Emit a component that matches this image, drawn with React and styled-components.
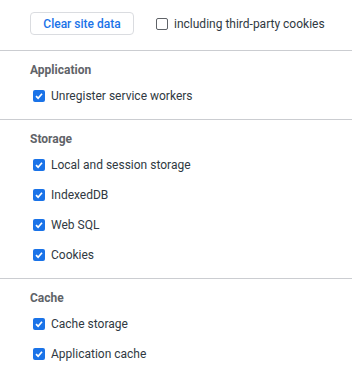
import styled, { createGlobalStyle } from 'styled-components';

const Global = createGlobalStyle`
  body {
    margin: 0;
    background: #fff;
    font-family: Roboto, "Liberation Sans", sans-serif;
    font-size: 12px;
    color: #303942;
  }
`;

const Toolbar = styled.div`
  display: flex;
  align-items: center;
  gap: 22px;
  padding: 12px 30px 15px;
  border-bottom: 1px solid #cbcdd1;
`;

const Button = styled.button`
  flex: none;
  height: 23px;
  width: 104px;
  padding: 0;
  border: 1px solid #dadce0;
  border-radius: 4px;
  background: #fff;
  color: #1a73e8;
  font-family: inherit;
  font-size: 12px;
  font-weight: 500;
`;

const Section = styled.div`
  padding: 12px 30px 13px;
  border-bottom: ${p => (p.last ? 'none' : '1px solid #cbcdd1')};
`;

const Heading = styled.div`
  font-weight: 700;
  color: #5f6368;
  line-height: 14px;
  margin-bottom: 9px;
`;

const List = styled.div`
  display: flex;
  flex-direction: column;
  gap: 10px;
`;

const Row = styled.label`
  display: flex;
  align-items: center;
  gap: 6px;
  height: 20px;
  white-space: nowrap;
  padding-left: ${p => (p.inset ? '3px' : '0')};
`;

const Box = styled.span`
  flex: none;
  box-sizing: border-box;
  width: 12px;
  height: 12px;
  border-radius: 2px;
  display: flex;
  align-items: center;
  justify-content: center;
  background: ${p => (p.checked ? '#1a73e8' : '#fff')};
  border: ${p => (p.checked ? 'none' : '1px solid #5f6368')};
`;

function Check({ checked, label, inset }) {
  return (
    <Row inset={inset}>
      <Box checked={checked}>
        {checked && (
          <svg width="10" height="10" viewBox="0 0 10 10">
            <path d="M2 5.2 L4.1 7.2 L8 2.8" fill="none" stroke="#fff" strokeWidth="1.7" />
          </svg>
        )}
      </Box>
      {label}
    </Row>
  );
}

const sections = [
  { title: 'Application', items: ['Unregister service workers'] },
  { title: 'Storage', items: ['Local and session storage', 'IndexedDB', 'Web SQL', 'Cookies'] },
  { title: 'Cache', items: ['Cache storage', 'Application cache'] },
];

export default function App() {
  return (
    <>
      <Global />
      <Toolbar>
        <Button>Clear site data</Button>
        <Check checked={false} label="including third-party cookies" />
      </Toolbar>
      {sections.map((s, i) => (
        <Section key={s.title} last={i === sections.length - 1}>
          <Heading>{s.title}</Heading>
          <List>
            {s.items.map(item => (
              <Check key={item} checked inset label={item} />
            ))}
          </List>
        </Section>
      ))}
    </>
  );
}
